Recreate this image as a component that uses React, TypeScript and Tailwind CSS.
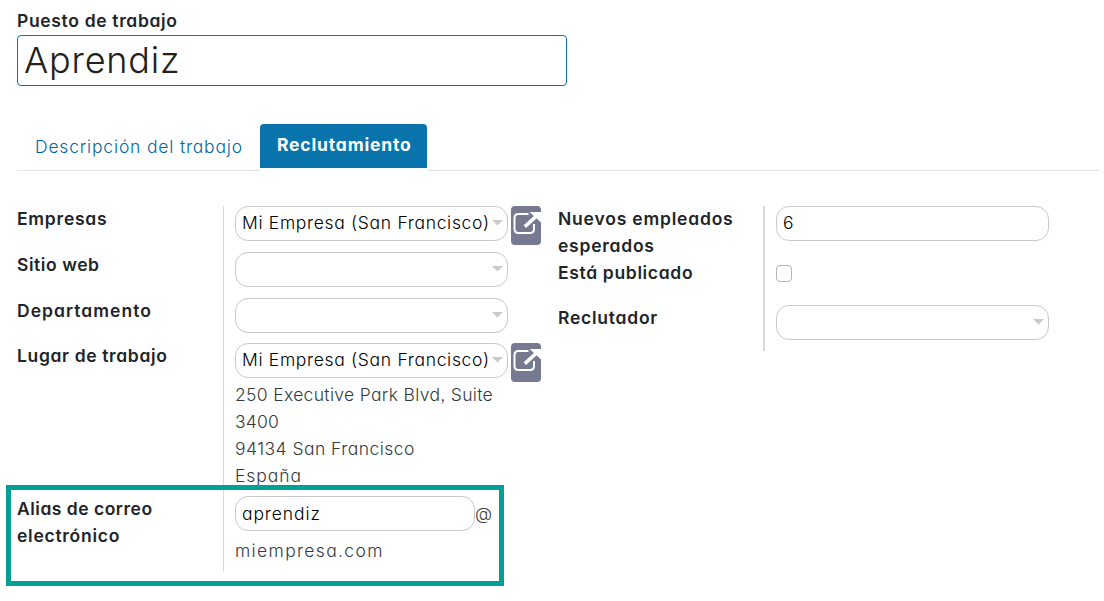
import type { ReactNode } from "react";

function Caret() {
  return (
    <svg width="11" height="6" viewBox="0 0 11 6" className="shrink-0">
      <path d="M0 0H11L5.5 5.5Z" fill="#c9c9c9" />
    </svg>
  );
}

function Select({ value }: { value?: string }) {
  return (
    <div className="flex h-[35px] w-[273px] shrink-0 items-center justify-between rounded-[13px] border border-[#c9c9c9] bg-white pb-0.5 pl-1.5 pr-1 text-black">
      <span className="w-[248px] overflow-hidden whitespace-nowrap tracking-[0.68px]">{value}</span>
      <Caret />
    </div>
  );
}

function ExternalButton() {
  return (
    <button className="ml-[3px] h-[39px] w-[30px] shrink-0 overflow-hidden rounded-[4px] bg-[#757a90]">
      <svg width="30" height="39" viewBox="0 0 30 39" fill="none">
        <path d="M17.500 8H7.500Q3.500 8 3.500 12V23Q3.500 27 7.500 27H19Q23 27 23 23V18" stroke="#fff" strokeWidth="2" />
        <path d="M13.800 20.700L25 10.500" stroke="#fff" strokeWidth="3.600" />
        <path d="M18.500 6H30V16.500Z" fill="#fff" />
      </svg>
    </button>
  );
}

function Label({ children }: { children: ReactNode }) {
  return <div className="-mt-px whitespace-nowrap font-semibold text-[#212529]">{children}</div>;
}

export default function App() {
  return (
    <main className="relative h-[601px] w-[1104px] overflow-hidden bg-white font-['Inter','Open_Sans',sans-serif] text-[17.5px] font-light leading-[27px] text-[#343b42] [font-feature-settings:'cv11','ss03']">
      <div className="pl-[17px] pt-2">
        <div className="flex h-[27px]">
          <Label><span className="tracking-[0.66px]">Puesto de trabajo</span></Label>
        </div>
        <div className="flex h-[51px] w-[550px] items-center rounded-[4px] border border-[#0874ab] pb-px pl-1.5 text-[36px] leading-[49px] text-[#212121]">
          <span className="tracking-[0.8px]">Aprendiz</span>
        </div>

        <nav className="mt-[38px] flex h-[47px] w-[1082px]">
          <div className="w-[243px] border-b border-[#dee2e6] pl-[18px] pt-[9px] text-[#0068a3]">
            <span className="whitespace-nowrap tracking-[0.82px]">Descripción del trabajo</span>
          </div>
          <div className="h-11 w-[167px] rounded-t-[4px] bg-[#0874ab] pl-[17px] pt-[7px] font-bold text-white">
            <span className="tracking-[0.82px]">Reclutamiento</span>
          </div>
          <div className="flex-1 border-b border-[#dee2e6]" />
        </nav>

        <div className="mt-[35px] flex items-start">
          <section className="flex h-[366px] w-[541px]">
            <div className="w-[207px] border-r border-[#d9d9d9]">
              <div className="flex h-[46px]"><Label><span className="tracking-[0.76px]">Empresas</span></Label></div>
              <div className="flex h-[46px]"><Label><span className="tracking-[0.57px]">Sitio web</span></Label></div>
              <div className="flex h-[45px]"><Label><span className="tracking-[1.04px]">Departamento</span></Label></div>
              <div className="flex h-[153px]"><Label><span className="tracking-[0.64px]">Lugar de trabajo</span></Label></div>
              <div className="flex">
                <Label>
                  <span className="tracking-[0.5px]">Alias de correo</span><br />
                  <span className="tracking-[0.73px]">electrónico</span>
                </Label>
              </div>
            </div>
            <div className="flex flex-1 flex-col pl-[11px]">
              <div className="flex h-[46px]"><Select value="Mi Empresa (San Francisco)" /><ExternalButton /></div>
              <div className="h-[46px]"><Select /></div>
              <div className="h-[45px]"><Select /></div>
              <div className="flex h-[38px]"><Select value="Mi Empresa (San Francisco)" /><ExternalButton /></div>
              <address className="h-[115px] whitespace-nowrap not-italic">
                <span className="tracking-[0.33px]">250 Executive Park Blvd, Suite</span><br />
                <span className="tracking-[0.2px]">3400</span><br />
                <span className="tracking-[0.46px]">94134 San Francisco</span><br />
                <span className="tracking-[0.95px]">España</span>
              </address>
              <div className="flex h-[35px] items-center">
                <div className="flex h-[35px] w-[240px] items-center rounded-[13px] border border-[#c9c9c9] pl-1.5 text-black">
                  <span className="tracking-[0.9px]">aprendiz</span>
                </div>
                <span>@</span>
              </div>
              <div className="pt-1.5"><span className="tracking-[1.34px]">miempresa.com</span></div>
            </div>
          </section>

          <section className="flex h-[145px] w-[491px]">
            <div className="w-[207px] border-r-2 border-[#d9d9d9]">
              <div className="flex h-[54px]">
                <Label>
                  <span className="tracking-[0.8px]">Nuevos empleados</span><br />
                  <span className="tracking-[0.75px]">esperados</span>
                </Label>
              </div>
              <div className="flex h-[45px]"><Label><span className="tracking-[0.66px]">Está publicado</span></Label></div>
              <div className="flex"><Label><span className="tracking-[0.75px]">Reclutador</span></Label></div>
            </div>
            <div className="flex-1 pl-[11px]">
              <div className="flex h-[35px] w-[273px] items-center rounded-[13px] border border-[#c9c9c9] pb-0.5 pl-1.5 text-black">6</div>
              <div className="mb-[23px] mt-6 h-[17px] w-4 rounded-[4px] border border-[#adb5bd]" />
              <Select />
            </div>
          </section>
        </div>
      </div>

      <div className="pointer-events-none absolute left-1.5 top-[485px] h-[101px] w-[498px] border-[5px] border-[#009f98]" />
    </main>
  );
}
